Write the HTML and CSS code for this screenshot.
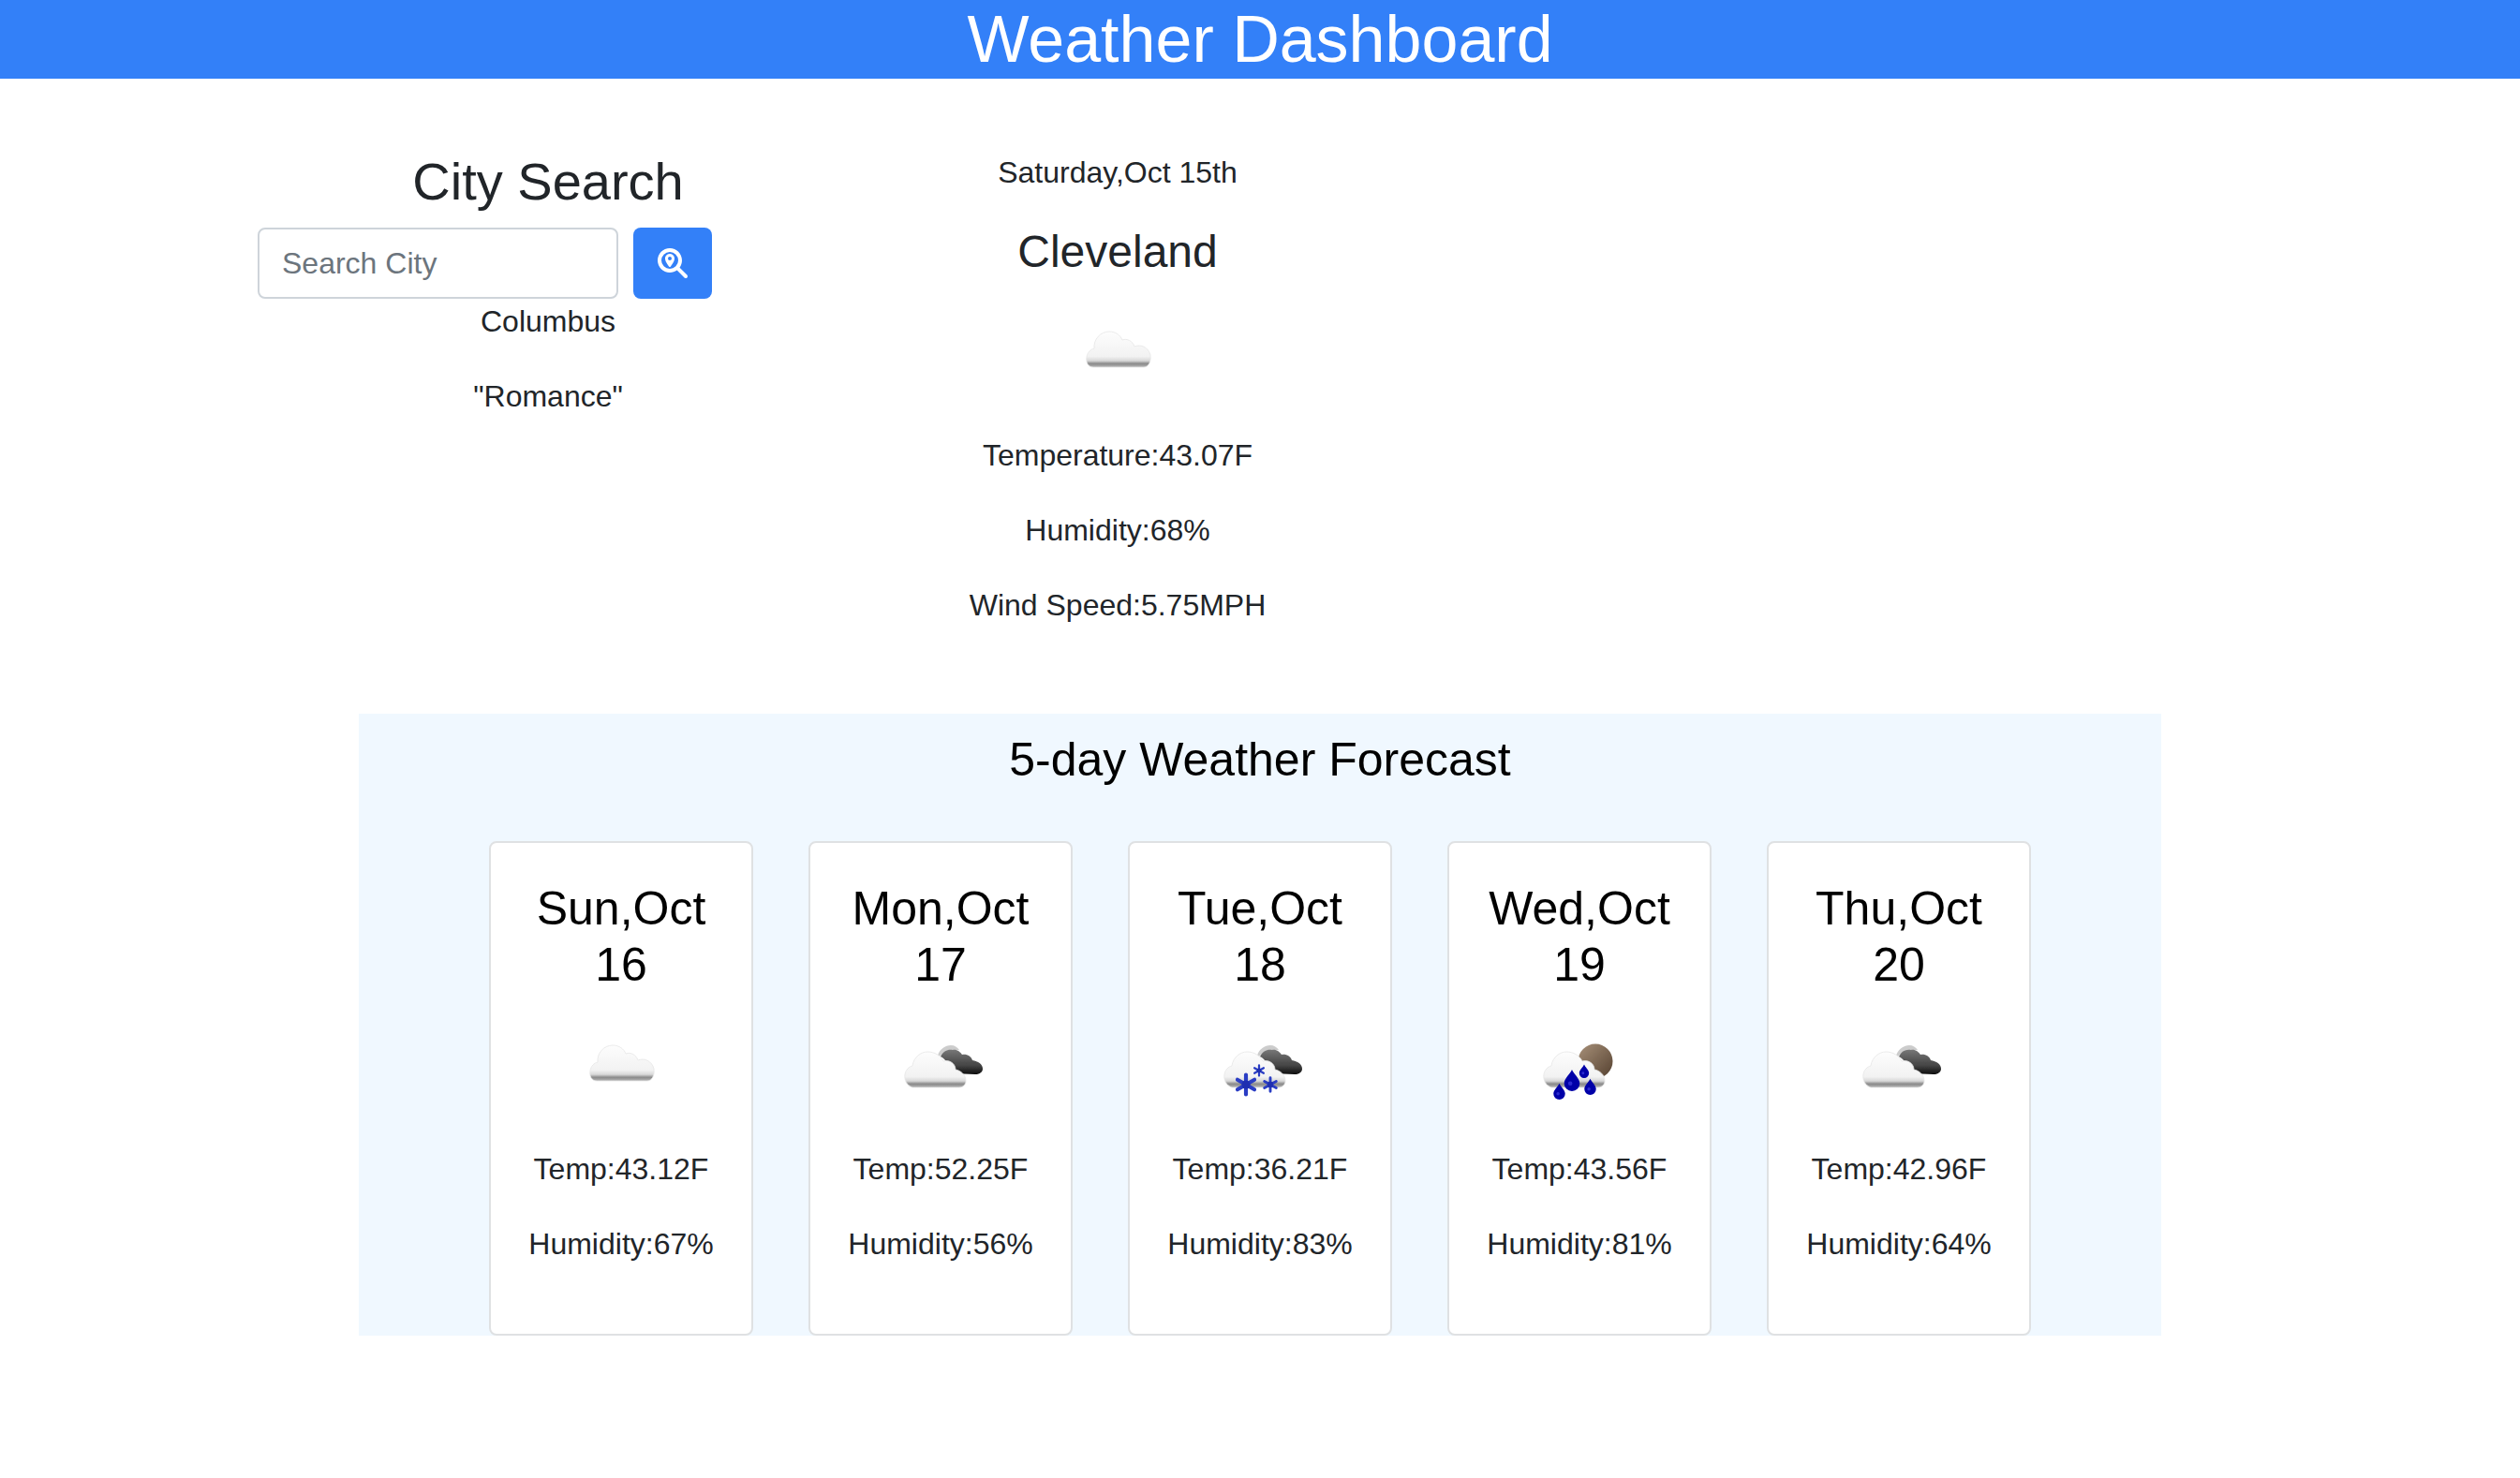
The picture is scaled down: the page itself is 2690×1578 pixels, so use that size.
FILE: index.html
```html
<!DOCTYPE html>
<html lang="en">
<head>
    <meta charset="UTF-8">
    <meta name="viewport" content="width=device-width, initial-scale=1.0">
    <title>Weather Dashboard</title>
    <link rel="stylesheet" href="styles.css">
</head>
<body>
<svg class="sprites" width="0" height="0" aria-hidden="true">
    <defs>
        <linearGradient id="cloudFill" x1="0" y1="0" x2="0" y2="1">
            <stop offset="0" stop-color="#fdfdfd"/>
            <stop offset="0.7" stop-color="#f2f2f2"/>
            <stop offset="0.82" stop-color="#d8d8d8"/>
            <stop offset="0.9" stop-color="#8a8a8a"/>
            <stop offset="1" stop-color="#b5b5b5"/>
        </linearGradient>
        <linearGradient id="darkFill" x1="0" y1="0" x2="0" y2="1">
            <stop offset="0" stop-color="#777"/>
            <stop offset="0.65" stop-color="#444"/>
            <stop offset="1" stop-color="#0c0c0c"/>
        </linearGradient>
        <linearGradient id="moonFill" x1="0" y1="0" x2="1" y2="1">
            <stop offset="0" stop-color="#a8917a"/>
            <stop offset="1" stop-color="#54402f"/>
        </linearGradient>
        <filter id="soft" x="-10%" y="-10%" width="120%" height="120%">
            <feGaussianBlur stdDeviation="0.6"/>
        </filter>
        <symbol id="cloudSingle" viewBox="0 0 100 100">
            <path filter="url(#soft)" fill="url(#cloudFill)" stroke="#e6e6e6" stroke-width="0.8" d="M24 78C18 78 16 72 17 67C18 62 21 59 25 58C24 48 32 40 41 40C48 40 53 44 55 49C60 47 66 50 68 56C75 53 83 57 85 65C86 72 83 78 78 78Z"/>
        </symbol>
        <symbol id="cloudBack" viewBox="0 0 100 100">
            <path filter="url(#soft)" fill="#ccc" d="M47 51C49 44 55 40 61 40C65 40 68 42 70 45L62 46C57 46 52 48 49 52Z"/>
            <path filter="url(#soft)" fill="url(#darkFill)" d="M50 52C53 46 58 44 63 45C67 44 71 47 73 50C78 49 83 52 84 56C90 57 95 60 95 65C95 69 91 71 87 71L62 70C60 62 56 55 50 52Z"/>
        </symbol>
        <symbol id="cloudFront" viewBox="0 0 100 100">
            <path filter="url(#soft)" fill="url(#cloudFill)" stroke="#e6e6e6" stroke-width="0.8" d="M20 85C14 83 11 77 12 71C13 66 16 63 20 62C21 53 29 47 36 47C44 47 50 51 53 57C60 55 66 60 66 66C72 67 77 72 77 78C77 82 74 85 70 85Z"/>
        </symbol>
        <symbol id="snowFlake" viewBox="-10 -10 20 20">
            <g filter="url(#soft)" stroke="#2a3cc4" stroke-width="3.2" stroke-linecap="round">
                <path d="M0-8V8M-7-4L7 4M-7 4L7-4"/>
            </g>
            <circle r="3.5" fill="#1f2fb0"/>
        </symbol>
        <symbol id="rainDrop" viewBox="0 0 20 26">
            <path filter="url(#soft)" fill="#0000a8" d="M10 1C12 6 19 11 19 17A9 9 0 0 1 1 17C1 11 8 6 10 1Z"/>
            <circle cx="8" cy="17" r="2.5" fill="#2b2bd0"/>
        </symbol>
        <symbol id="iconOvercast" viewBox="0 0 100 100">
            <use href="#cloudSingle"/>
        </symbol>
        <symbol id="iconBroken" viewBox="0 0 100 100">
            <use href="#cloudBack"/>
            <use href="#cloudFront"/>
        </symbol>
        <symbol id="iconSnow" viewBox="0 0 100 100">
            <use href="#cloudBack"/>
            <use href="#cloudFront"/>
            <use href="#snowFlake" x="22" y="69" width="26" height="26"/>
            <use href="#snowFlake" x="52" y="73" width="18" height="18"/>
            <use href="#snowFlake" x="42" y="60" width="14" height="14"/>
        </symbol>
        <symbol id="iconRain" viewBox="0 0 100 100">
            <circle filter="url(#soft)" cx="67" cy="57" r="18.500" fill="url(#moonFill)"/>
            <use href="#cloudFront"/>
            <use href="#rainDrop" x="32" y="65" width="20" height="24"/>
            <use href="#rainDrop" x="49" y="60" width="12" height="15"/>
            <use href="#rainDrop" x="54" y="75" width="15" height="18"/>
            <use href="#rainDrop" x="21" y="80" width="15" height="18"/>
        </symbol>
    </defs>
</svg>

<header class="page-header">
    <h1 class="page-title">Weather Dashboard</h1>
</header>

<main class="top-row">
    <section class="search-col">
        <h3 class="search-title">City Search</h3>
        <form class="search-form">
            <input class="search-input" type="text" placeholder="Search City">
            <button class="search-btn" type="button" aria-label="Search">
                <svg class="search-icon" viewBox="0 0 512 512"><path fill="#fff" fill-rule="evenodd" d="M416 208c0 45.900-14.900 88.300-40 122.700L502.600 457.400c12.500 12.500 12.500 32.800 0 45.300s-32.800 12.500-45.300 0L330.700 376c-34.400 25.200-76.800 40-122.700 40C93.100 416 0 322.900 0 208S93.100 0 208 0S416 93.100 416 208zM208 352a144 144 0 1 0 0-288 144 144 0 1 0 0 288zM288 176c0 48.800-46.500 111.600-68.600 138.600c-6 7.300-16.800 7.300-22.700 0C174.500 287.600 128 224.800 128 176c0-44.200 35.800-80 80-80s80 35.800 80 80zm-112 0a32 32 0 1 0 64 0 32 32 0 1 0-64 0z"/></svg>
            </button>
        </form>
        <p class="history-item">Columbus</p>
        <p class="history-item">"Romance"</p>
    </section>

    <section class="current-col">
        <p class="info-line">Saturday,Oct 15th</p>
        <h4 class="current-city">Cleveland</h4>
        <svg class="weather-icon"><use href="#iconOvercast"/></svg>
        <p class="info-line">Temperature:43.07F</p>
        <p class="info-line">Humidity:68%</p>
        <p class="info-line">Wind Speed:5.75MPH</p>
    </section>
</main>

<section class="forecast">
    <h2 class="forecast-title">5-day Weather Forecast</h2>
    <div class="forecast-cards">
        <div class="day-card">
            <h3 class="day-title">Sun,Oct<br>16</h3>
            <svg class="weather-icon"><use href="#iconOvercast"/></svg>
            <p class="info-line">Temp:43.12F</p>
            <p class="info-line">Humidity:67%</p>
        </div>
        <div class="day-card">
            <h3 class="day-title">Mon,Oct<br>17</h3>
            <svg class="weather-icon"><use href="#iconBroken"/></svg>
            <p class="info-line">Temp:52.25F</p>
            <p class="info-line">Humidity:56%</p>
        </div>
        <div class="day-card">
            <h3 class="day-title">Tue,Oct<br>18</h3>
            <svg class="weather-icon"><use href="#iconSnow"/></svg>
            <p class="info-line">Temp:36.21F</p>
            <p class="info-line">Humidity:83%</p>
        </div>
        <div class="day-card">
            <h3 class="day-title">Wed,Oct<br>19</h3>
            <svg class="weather-icon"><use href="#iconRain"/></svg>
            <p class="info-line">Temp:43.56F</p>
            <p class="info-line">Humidity:81%</p>
        </div>
        <div class="day-card">
            <h3 class="day-title">Thu,Oct<br>20</h3>
            <svg class="weather-icon"><use href="#iconBroken"/></svg>
            <p class="info-line">Temp:42.96F</p>
            <p class="info-line">Humidity:64%</p>
        </div>
    </div>
</section>
</body>
</html>
```

FILE: styles.css
```css
body {
    font-family: 'Liberation Sans', Arial, sans-serif;
    font-size: 32px;
    line-height: 48px;
    margin: 0;
    color: #212529;
    background: #fff;
}

.sprites {
    position: absolute;
}

.page-header {
    background: #3380f8;
    text-align: center;
}

.page-title {
    margin: 0;
    color: #fff;
    font-size: 70px;
    font-weight: 400;
    line-height: 84px;
}

.top-row {
    display: flex;
    padding: 76px 0 0 275px;
}

.search-col {
    width: 620px;
    text-align: center;
}

.search-title {
    margin: 0 0 16px;
    font-size: 56px;
    font-weight: 400;
    line-height: 67px;
}

.search-form {
    display: flex;
    gap: 16px;
}

.search-input {
    width: 385px;
    height: 76px;
    padding: 12px 24px;
    border: 2px solid #ced4da;
    border-radius: 8px;
    box-sizing: border-box;
    font-family: inherit;
    font-size: 32px;
    color: #212529;
}

.search-input::placeholder {
    color: #6c757d;
}

.search-btn {
    display: flex;
    align-items: center;
    justify-content: center;
    width: 84px;
    height: 76px;
    padding: 0;
    border: none;
    border-radius: 8px;
    background: #3380f8;
}

.search-icon {
    width: 32px;
    height: 32px;
}

.history-item {
    margin: 0 0 32px;
}

.current-col {
    width: 596px;
    text-align: center;
}

.info-line {
    margin: 0 0 32px;
}

.current-city {
    margin: 0 0 16px;
    font-size: 48px;
    font-weight: 400;
    line-height: 58px;
}

.weather-icon {
    display: block;
    width: 100px;
    height: 100px;
    margin: 0 auto 48px;
}

.forecast {
    width: 1924px;
    margin: 60px auto 0;
    padding-top: 19px;
    box-sizing: border-box;
    background: #f0f8ff;
}

.forecast-title {
    margin: 0 0 57px;
    color: #000;
    font-size: 50px;
    font-weight: 400;
    line-height: 60px;
    text-align: center;
}

.forecast-cards {
    display: flex;
    justify-content: center;
    gap: 59px;
}

.day-card {
    width: 282px;
    height: 528px;
    padding-top: 40px;
    border: 2px solid #dfe1e3;
    border-radius: 8px;
    box-sizing: border-box;
    background: #fff;
    text-align: center;
}

.day-title {
    margin: 0 0 16px;
    color: #000;
    font-size: 50px;
    font-weight: 400;
    line-height: 60px;
}
```
